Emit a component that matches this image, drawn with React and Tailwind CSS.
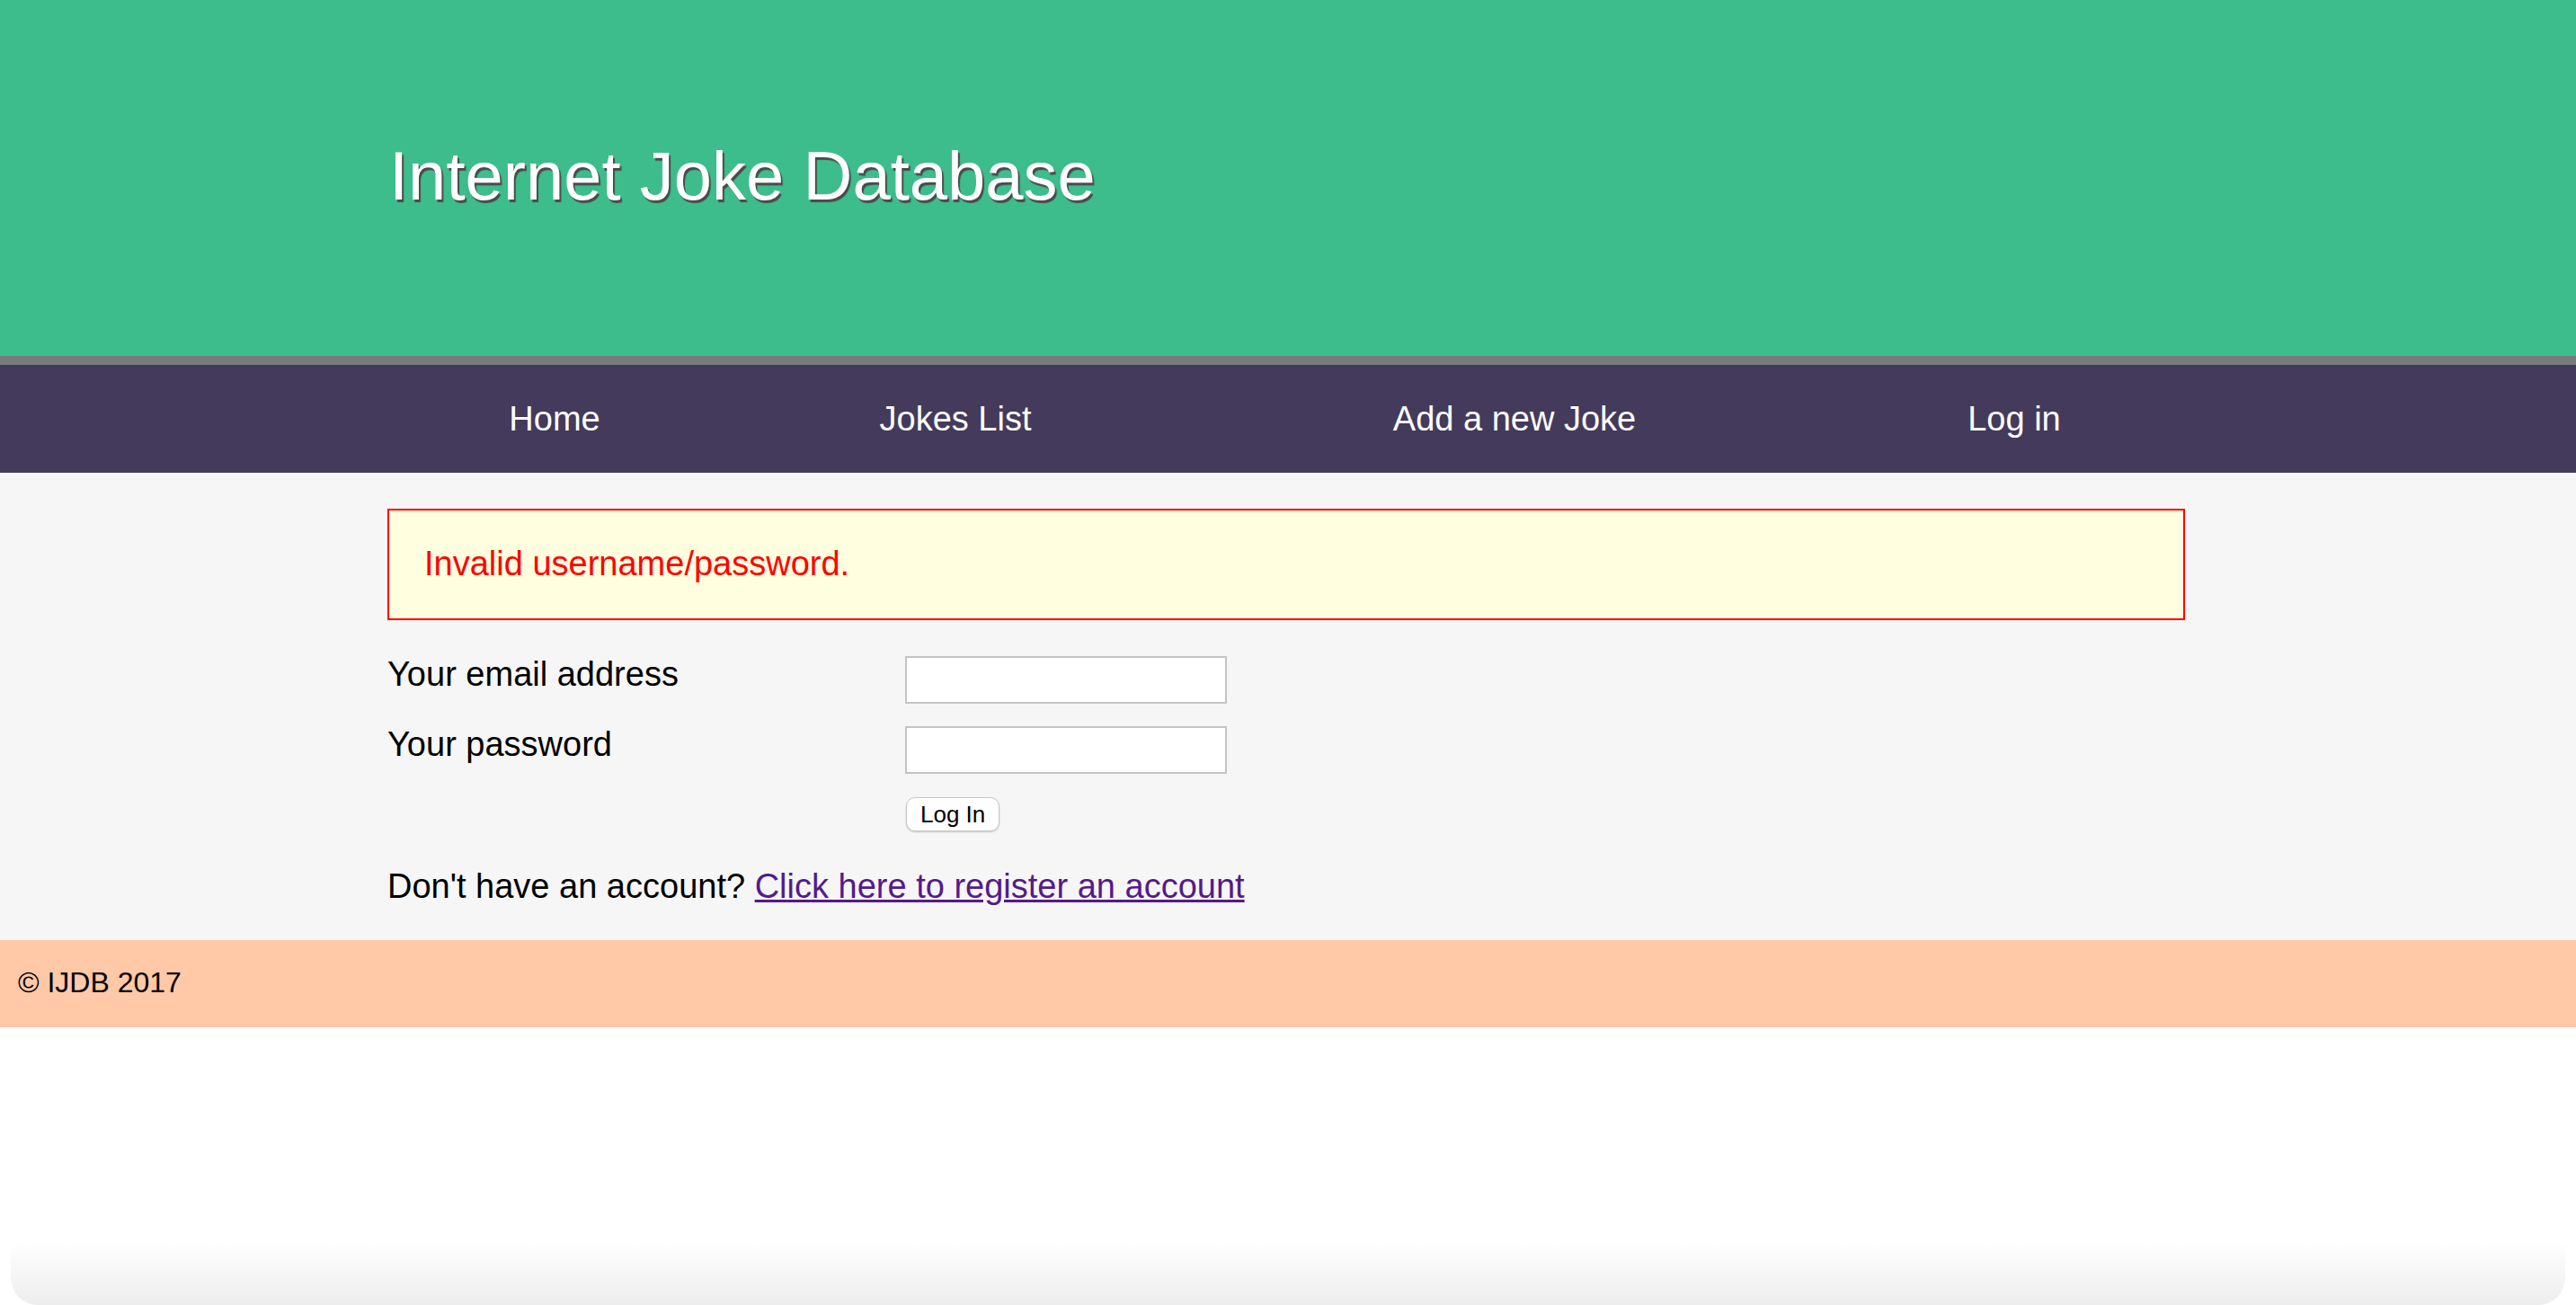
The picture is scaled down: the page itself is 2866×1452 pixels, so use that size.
import React from 'react';

const navItems = [
  { label: 'Home', href: '#', spacing: 'ml-[36px]' },
  { label: 'Jokes List', href: '#', spacing: 'ml-[146px]' },
  { label: 'Add a new Joke', href: '#', spacing: 'ml-[322px]' },
  { label: 'Log in', href: '#', spacing: 'ml-[256px]' },
];

const App = () => {
  return (
    <div className="min-h-screen flex flex-col bg-white font-['Liberation_Sans',Arial,sans-serif] text-black">
      {/* Header */}
      <header className="h-[406px] bg-[#3dbd8c] border-b-[10px] border-[#7a7a7a]">
        <div className="w-[2000px] ml-[431px] pt-[158px]">
          <h1 className="text-[76px] leading-none text-white pl-[2px] [text-shadow:2px_3px_1px_#4a4a4a]">
            Internet Joke Database
          </h1>
        </div>
      </header>

      {/* Nav */}
      <nav className="h-[120px] bg-[#443a5c] flex items-center">
        <ul className="w-[2000px] ml-[431px] flex">
          {navItems.map((item) => (
            <li key={item.label} className={`w-[300px] text-center ${item.spacing}`}>
              <a href={item.href} className="text-[38px] leading-none text-white">
                {item.label}
              </a>
            </li>
          ))}
        </ul>
      </nav>

      {/* Main */}
      <main className="bg-[#f6f6f6]">
        <div className="w-[2000px] ml-[431px] pt-[40px] pb-[41px]">
          <div className="border-2 border-[#ff0000] bg-[#ffffe0] px-[39px] pt-[40px] pb-[42px]">
            <p className="text-[38px] leading-none text-[#ff0000]">Invalid username/password.</p>
          </div>

          <form className="mt-[40px] flex flex-col">
            <div className="flex items-start">
              <label className="w-[576px] text-[38px] leading-none pt-[1px]">Your email address</label>
              <input type="text" className="w-[358px] h-[53px] bg-white border-2 border-[#c4c4c4] outline-none" />
            </div>
            <div className="flex items-start mt-[25px]">
              <label className="w-[576px] text-[38px] leading-none pt-[1px]">Your password</label>
              <input type="password" className="w-[358px] h-[53px] bg-white border-2 border-[#c4c4c4] outline-none" />
            </div>
            <div className="flex mt-[26px] pl-[577px]">
              <button
                type="button"
                className="text-[26px] leading-none px-[15px] py-[5px] bg-white border border-[#c8c8c8] rounded-[10px] shadow-[0_1px_2px_rgba(0,0,0,0.2)]"
              >
                Log In
              </button>
            </div>
          </form>

          <p className="mt-[42px] text-[38px] leading-none">
            Don't have an account?{' '}
            <a href="#" className="text-[#551a8b] underline">
              Click here to register an account
            </a>
          </p>
        </div>
      </main>

      {/* Footer */}
      <footer className="bg-[#ffc9a8] px-[20px] pt-[31px] pb-[34px]">
        <p className="text-[32px] leading-none">© IJDB 2017</p>
      </footer>

      <div className="flex-1" />
      <div className="h-[70px] mx-[12px] rounded-b-[30px] bg-gradient-to-b from-white to-[#ededed]" />
    </div>
  );
};

export default App;
